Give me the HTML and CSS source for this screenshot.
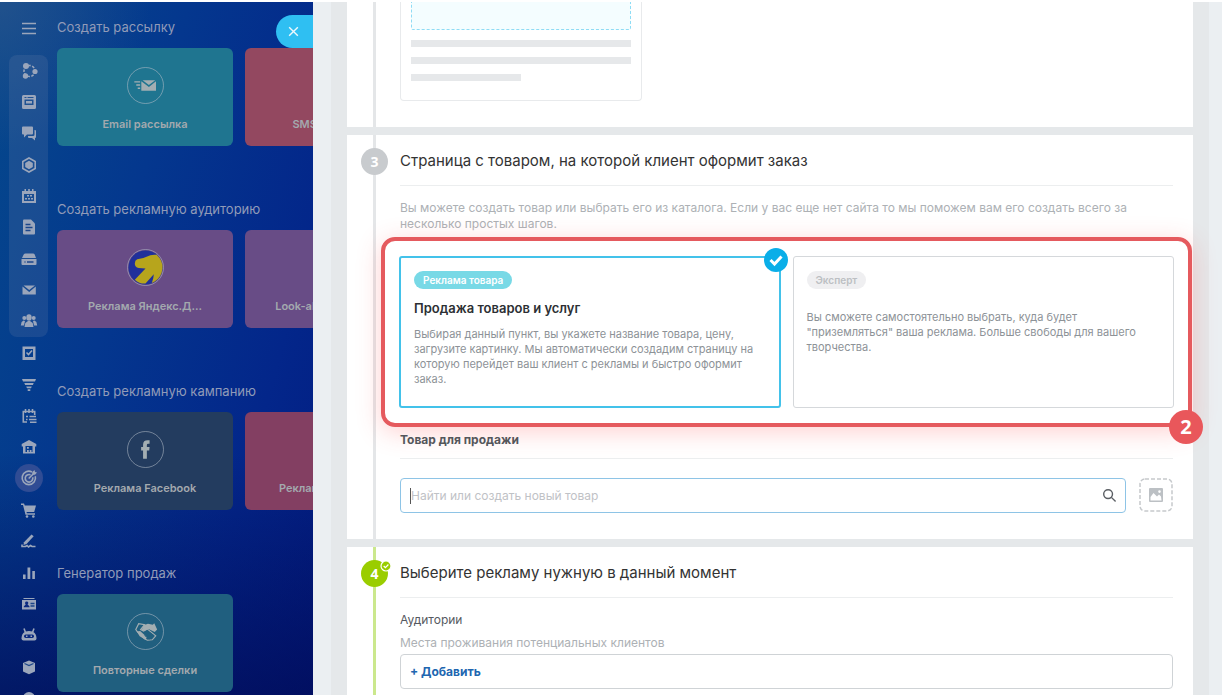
FILE: index.html
```html
<!DOCTYPE html>
<html lang="ru">
<head>
<meta charset="utf-8">
<meta name="viewport" content="width=device-width, initial-scale=1">
<title>Создать рекламу</title>
<link rel="stylesheet" href="styles.css">
</head>
<body>
<div class="app">
  <aside class="start">
    <nav class="menu" aria-label="Меню">
      <button class="menu-toggle" aria-label="Развернуть меню"><svg class="ico" viewBox="0 0 18 18"><path class="line" d="M2 3.500h14M2 8.500h14M2 13.500h14"/></svg></button>
      <div class="menu-group">
        <a href="#" aria-label="CRM"><svg class="ico" viewBox="0 0 18 18"><circle cx="9.500" cy="9" r="5.500" class="line" stroke-dasharray="2.500 1.500"/><circle cx="6" cy="4" r="3"/><circle cx="15" cy="9.500" r="2.600"/><circle cx="5.500" cy="14" r="2.700"/></svg></a>
        <a href="#" aria-label="Лента"><svg class="ico" viewBox="0 0 18 18"><path fill-rule="evenodd" d="M3.500 2h11a1.500 1.500 0 0 1 1.500 1.500v11a1.500 1.500 0 0 1-1.500 1.500h-11A1.500 1.500 0 0 1 2 14.500v-11A1.500 1.500 0 0 1 3.500 2zM4.500 4v1h2V4zm3 0v1h6V4zM4.500 6.500v5.500h9V6.500zM6 8h6v2.500H6z"/></svg></a>
        <a href="#" aria-label="Чат"><svg class="ico" viewBox="0 0 18 18"><path d="M3 2.500h9a1 1 0 0 1 1 1v6a1 1 0 0 1-1 1H7l-3 3v-3H3a1 1 0 0 1-1-1v-6a1 1 0 0 1 1-1zM14.500 6h.5a1 1 0 0 1 1 1v6a1 1 0 0 1-1 1v2.500L12 14H9a1 1 0 0 1-1-1v-1h5a1.500 1.500 0 0 0 1.500-1.500z"/></svg></a>
        <a href="#" aria-label="Сайты"><svg class="ico" viewBox="0 0 18 18"><path class="line" d="M9 2l6.200 3.500v7L9 16l-6.200-3.500v-7z"/><path d="M9 4.800l3.800 2.100v4.200L9 13.200l-3.800-2.100V6.900z"/></svg></a>
        <a href="#" aria-label="Календарь"><svg class="ico" viewBox="0 0 18 18"><path fill-rule="evenodd" d="M2 4h2.500V2H6v2h2.200V2h1.600v2H12V2h1.500v2H16v12H2zm2 3v7h10V7z"/><path d="M7 8h2v1.600H7zm3 0h2v1.600h-2zM5 11h2v1.600H5zm3 0h2v1.600H8zm3 0h2v1.600h-2z"/></svg></a>
        <a href="#" aria-label="Документы"><svg class="ico" viewBox="0 0 18 18"><path d="M4 1.500h7l4 4v10a1 1 0 0 1-1 1H4a1 1 0 0 1-1-1v-13a1 1 0 0 1 1-1z"/><path class="cut" d="M5.500 6.500h5M5.500 9.500h7M5.500 12.500h5"/></svg></a>
        <a href="#" aria-label="Диск"><svg class="ico" viewBox="0 0 18 18"><path d="M5.500 3.500h7.500q1.200 0 1.700 1L16 8H2l1.700-3.500q.5-1 1.800-1zM2 9h14.500v5a1 1 0 0 1-1 1H2.500a1 1 0 0 1-1-1V9z"/><path class="cut" d="M4.500 12h1M7 12h6.500"/></svg></a>
        <a href="#" aria-label="Почта"><svg class="ico" viewBox="0 0 18 18"><path d="M3.500 4.500h11.500L9.200 9zM2.500 5.500l6.700 5.500 6.600-5.500v8h-13.300z"/></svg></a>
        <a href="#" aria-label="Группы"><svg class="ico" viewBox="0 0 18 18"><ellipse cx="9" cy="5.500" rx="2.700" ry="3.300"/><circle cx="4.300" cy="6" r="2"/><circle cx="13.700" cy="6" r="2"/><path d="M4.500 15l.8-4L8 9h2l2.700 2 .8 4zM.8 13.500l.8-3.500 2-1.600L5 9l-1 4.500zM17.200 13.500l-.8-3.500-2-1.600L13 9l1 4.500z"/></svg></a>
      </div>
      <div class="menu-rest">
        <a href="#" aria-label="Задачи"><svg class="ico" viewBox="0 0 18 18"><path fill-rule="evenodd" d="M2.500 2.500h13v13.500h-13zm2.500 2.500v8h8V5z"/><path class="line" d="M6.500 8.500l2 2 3.500-4"/></svg></a>
        <a href="#" aria-label="Воронка"><svg class="ico" viewBox="0 0 18 18"><path d="M2 4h14l-1 2.500H3zM4.300 8h9.400l-.8 2H5.100zM6.200 11.500h5.600L11 13.200H7zM7.700 14.200h2.600v1.800H7.700z"/></svg></a>
        <a href="#" aria-label="Бронирование"><svg class="ico" viewBox="0 0 18 18"><path class="line" d="M7 15H3.300V4.500h11.400V8M5.500 2v4M9 2v4M12.500 2v4"/><path class="line" d="M6 9.500h2M9.500 9.500H16M6 12.500h1.500M9 12.500h7.500M10 15.300h6.500"/></svg></a>
        <a href="#" aria-label="Склад"><svg class="ico" viewBox="0 0 18 18"><path fill-rule="evenodd" d="M9 2l7.300 4v2.500H15V15.500H3V8.500H1.700V6zM5.500 8v6h7V8z"/><path d="M7 9h1.800v1.800H7zm0 3h1.800v2H7zm2.700 0h1.800v2H9.700z"/></svg></a>
        <a href="#" class="current" aria-label="Маркетинг"><svg class="ico" viewBox="0 0 18 18"><path class="line" d="M12 3a6.700 6.700 0 1 0 3.300 4.200M10.500 5.800a3.800 3.800 0 1 0 2.200 2.500M8.700 9.500l5-5"/><path d="M12.300 5.500V3l2.200-2 .5 2 2 .5-2 2.200z"/></svg></a>
        <a href="#" aria-label="Магазин"><svg class="ico" viewBox="0 0 18 18"><path d="M1 2.500h3l.8 2H16l-1.800 6.500H6.500l.4 1.300H15v1.400H5.500L3 4H1z"/><circle cx="7" cy="15.500" r="1.300"/><circle cx="13.300" cy="15.500" r="1.300"/></svg></a>
        <a href="#" aria-label="Подпись"><svg class="ico" viewBox="0 0 18 18"><path d="M11.500 2.500l2.200 1.700L6.500 12l-3 1 .5-2.800z"/><path class="line" d="M2 12.500v2h3.500l1.500-1 1.500 1.500 2-1.500 1.500 1h3.500"/></svg></a>
        <a href="#" aria-label="Аналитика"><svg class="ico" viewBox="0 0 18 18"><path d="M3 10.500h2.600V15H3zM7.500 3.500h2.800V15H7.500zM12.300 7h2.600v8h-2.600z"/></svg></a>
        <a href="#" aria-label="Контакты"><svg class="ico" viewBox="0 0 18 18"><path d="M3.500 3h11v1h-11zM2 5h14v9.500H2z"/><path class="cut" d="M10.500 8.500h4M10.500 11h4"/><path class="hole" d="M6.500 6.500a1.500 1.500 0 0 1 1 2.800l2 2.200v.8H3.800v-.8l2-2.200a1.500 1.500 0 0 1 .7-2.800z"/></svg></a>
        <a href="#" aria-label="Роботы"><svg class="ico" viewBox="0 0 18 18"><path class="line" d="M4 2.500l1.500 4M14 2.500l-1.500 4"/><path d="M9 5c5 0 7.500 3 7.500 7.500q0 2-2 2h-11q-2 0-2-2C1.500 8 4 5 9 5z"/><rect class="hole" x="4" y="8.500" width="10" height="3.500" rx="1.700"/><path d="M6 9.500h1.500v1.500H6zm4.500 0H12v1.500h-1.500z"/></svg></a>
        <a href="#" aria-label="Приложения"><svg class="ico" viewBox="0 0 18 18"><path d="M9 2.500l6 2.500v8.500l-6 2.800-6-2.800V5z"/><path class="cut" d="M4.500 5.500L9 7.500l4.500-2"/></svg></a>
        <a href="#" aria-label="Ещё"><svg class="ico" viewBox="0 0 18 18"><circle cx="9" cy="9" r="6"/></svg></a>
      </div>
    </nav>
    <div class="catalog">
      <section>
        <h2>Создать рассылку</h2>
        <div class="tiles">
          <button class="tile teal"><span class="ring"><svg viewBox="0 0 36 36"><path d="M6.500 13.500h6V15h-6zM8.500 16.700h4v1.500h-4zM10 20h2.500v1.500H10zM15 12.500h13l-6.500 5zM13.700 13.500l7.800 6 7.300-6v10H13.700z"/></svg></span>Email рассылка</button>
          <button class="tile rose"><span class="ring"></span>SMS рассылка</button>
        </div>
      </section>
      <section>
        <h2>Создать рекламную аудиторию</h2>
        <div class="tiles">
          <button class="tile violet"><span class="ring"><svg viewBox="0 0 36 36"><circle cx="18" cy="18" r="17.500" fill="#20309a"/><path fill="#b7a51c" d="M9.500 9.500Q17 8.500 23 5.500q3-1 6.500-.5Q36 11 35.500 19q-1 9-8 13.500l-3 1.500q2-5 2-9L18 34.500q-6 .5-11-4L18 19l-7-.5q-4-.5-4-4.500 0-3.500 2.500-4.500z"/></svg></span>Реклама Яндекс.Д...</button>
          <button class="tile violet"><span class="ring"></span>Look-alike аудитория</button>
        </div>
      </section>
      <section>
        <h2>Создать рекламную кампанию</h2>
        <div class="tiles">
          <button class="tile navy"><span class="ring"><svg viewBox="0 0 36 36"><path d="M15.500 27.500V19H13.500v-3.500h2V13q0-4.500 4.700-4.500h2V12h-1.500q-1.300 0-1.300 1.300v2.200h2.800l-.4 3.500h-2.400v8.500z"/></svg></span>Реклама Facebook</button>
          <button class="tile plum"><span class="ring"></span>Реклама ВКонтакте</button>
        </div>
      </section>
      <section>
        <h2>Генератор продаж</h2>
        <div class="tiles">
          <button class="tile sea"><span class="ring"><svg viewBox="0 0 36 36"><path d="M8 16l3-6 6 1-4 5 3 1.500 4-2 8.500 7-3.500 4-5 .5-3-1.500L9.500 18z" class="shake"/><path d="M16 11.500l4.500-1.500 5 1 1.500-1.500 3 6.500-2.500 2.500-6.500-3-4.500 2-2.500-1zM9 18l3.500-.5 7 6.500-1.500 2.500-6-3.500z"/><path class="thin" d="M18 19.500l6 4.500M20.500 18l6 4M17 22l5 4"/></svg></span>Повторные сделки</button>
        </div>
      </section>
    </div>
    <button class="close" aria-label="Закрыть"><svg viewBox="0 0 12 12"><path d="M2 2l8 8M10 2l-8 8"/></svg></button>
  </aside>

  <main class="panel">
    <div class="steps">
      <section class="step">
        <div class="rail"></div>
        <div class="body">
          <div class="preview"><div class="drop"></div><i></i><i></i><i class="short"></i></div>
        </div>
      </section>

      <section class="step">
        <div class="rail"><span class="num">3</span></div>
        <div class="body">
          <h1>Страница с товаром, на которой клиент оформит заказ</h1>
          <p class="hint">Вы можете создать товар или выбрать его из каталога. Если у вас еще нет сайта то мы поможем вам его создать всего за несколько простых шагов.</p>
          <div class="options">
            <label class="option">
              <input type="radio" name="mode" checked>
              <span class="tag">Реклама товара</span>
              <strong>Продажа товаров и услуг</strong>
              <span class="text">Выбирая данный пункт, вы укажете название товара, цену, загрузите картинку. Мы автоматически создадим страницу на которую перейдет ваш клиент с рекламы и быстро оформит заказ.</span>
              <svg class="tick" viewBox="0 0 24 24"><circle cx="12" cy="12" r="12"/><path d="M6.500 12l4 4 7-7.500"/></svg>
            </label>
            <label class="option">
              <input type="radio" name="mode">
              <span class="tag">Эксперт</span>
              <span class="text">Вы сможете самостоятельно выбрать, куда будет "приземляться" ваша реклама. Больше свободы для вашего творчества.</span>
            </label>
            <div class="callout"><span>2</span></div>
          </div>
          <h2 class="field-title"><label for="product">Товар для продажи</label></h2>
          <div class="product">
            <div class="search">
              <input id="product" type="text" placeholder="Найти или создать новый товар">
              <button aria-label="Найти"><svg viewBox="0 0 16 16"><circle cx="6.500" cy="6.500" r="4.700"/><path d="M10 10l4.500 4.500"/></svg></button>
            </div>
            <button class="image" aria-label="Добавить изображение"><svg class="frame" viewBox="0 0 34 34"><rect x="1" y="1" width="32" height="32" rx="5"/></svg><svg class="photo" viewBox="0 0 14 14"><path fill-rule="evenodd" d="M1 0h12a1 1 0 0 1 1 1v12a1 1 0 0 1-1 1H1a1 1 0 0 1-1-1V1a1 1 0 0 1 1-1zM1.500 12.500h11l-.5-4-2-2-2 2-3.500-3.500-3 4zM10.500 2.300a1.300 1.300 0 1 0 0 2.600 1.300 1.300 0 0 0 0-2.600z"/></svg></button>
          </div>
        </div>
      </section>

      <section class="step done">
        <div class="rail"><span class="num">4<svg viewBox="0 0 12 12"><circle cx="6" cy="6" r="5"/><path d="M3.700 6l1.700 1.700 3-3.200"/></svg></span></div>
        <div class="body">
          <h1>Выберите рекламу нужную в данный момент</h1>
          <h3>Аудитории</h3>
          <p class="sub">Места проживания потенциальных клиентов</p>
          <div class="box"><button class="add">+ Добавить</button></div>
        </div>
      </section>
    </div>
  </main>
</div>
</body>
</html>
```
FILE: styles.css
```css
* { box-sizing: border-box; }
body { margin: 0; background: #fff; font-family: Inter, "Liberation Sans", sans-serif; color: #333; }
h1, h2, h3, p { margin: 0; font-weight: 400; }
button { border: 0; padding: 0; background: none; font: inherit; color: inherit; cursor: pointer; }
svg { display: block; }

.app { display: flex; height: 100vh; padding: 2px 0 4px; overflow: hidden; }

/* start page */
.start {
  position: relative; flex: none; display: flex; width: 313px; overflow: hidden; color: #919bb8;
  background:
    radial-gradient(circle at 0 0, rgba(60, 90, 140, .5), transparent 150px),
    linear-gradient(180deg, transparent 65%, rgba(1, 8, 80, .65) 100%),
    linear-gradient(105deg, #05488c 0%, #04378e 38%, #03268a 75%, #021c82 100%);
}
.menu { flex: none; display: flex; flex-direction: column; width: 57px; padding: 11px 9px 0; }
.menu-toggle { flex: none; display: grid; place-items: center; height: 31px; }
.menu-toggle + * { margin-top: 11px; }
.ico { width: 18px; height: 18px; fill: #9ba6bb; }
.ico .line { fill: none; stroke: #9ba6bb; stroke-width: 1.6; }
.ico .cut { fill: none; stroke: #1c468a; stroke-width: 1.3; }
.ico .hole { fill: #0b2a80; }
.menu-group, .menu-rest { flex: none; display: grid; grid-auto-rows: 1fr; }
.menu-group { height: 282px; border-radius: 8px; background: rgba(110, 130, 170, .2); }
.menu-rest { height: 377px; }
.menu a { display: grid; place-items: center; }
.menu .current::before { content: ""; grid-area: 1 / 1; width: 28px; height: 28px; border-radius: 50%; background: #304c94; }
.menu .current .ico { grid-area: 1 / 1; }

.catalog { flex: none; display: flex; flex-direction: column; gap: 52px; padding-top: 14px; }
.catalog h2 { font-size: 13px; line-height: 22px; margin-bottom: 10px; }
.tiles { display: flex; gap: 12px; }
.tile {
  flex: none; display: flex; flex-direction: column; align-items: center; gap: 12px; width: 176px; height: 98px;
  padding-top: 19px; border-radius: 6px; color: #a3a9ae; font-size: 11px; line-height: 16px; font-weight: 600;
}
.ring { width: 37px; height: 37px; border: 1px solid rgba(180, 190, 200, .55); border-radius: 50%; }
.ring svg { fill: #a3aeb2; }
.ring .shake, .ring .thin { fill: none; stroke: #a3aeb2; stroke-width: 1.2; }
.ring .thin { stroke: #215f7e; stroke-width: 1; }
.teal { background: #1f7590; }
.rose { background: #934860; }
.violet { background: #684c86; }
.navy { background: #233c5f; }
.plum { background: #833f62; }
.sea { background: #205f7f; }
.close {
  position: absolute; top: 13px; right: 0; display: flex; align-items: center; width: 37px; height: 33px;
  padding-left: 11px; border-radius: 17px 0 0 17px; background: #2fbff2;
}
.close svg { width: 13px; height: 13px; fill: none; stroke: #eef8fd; stroke-width: 1.3; }

/* panel */
.panel { flex: 1; min-width: 0; overflow: hidden; padding: 0 13px 0 18px; background: #ebeff2; }
.steps { display: flex; flex-direction: column; gap: 8px; min-height: 100%; padding: 0 16px; background: #e5e8ea; }
.step { display: flex; padding-right: 20px; background: #fff; }
.rail {
  flex: none; display: flex; justify-content: center; align-items: flex-start; width: 53px; padding: 13px 0 0 2px;
  background: linear-gradient(#e4e6e8, #e4e6e8) 26px 0 / 3px 100% no-repeat;
}
.done .rail { background-image: linear-gradient(#cbe88d, #cbe88d); }
.num {
  position: relative; width: 27px; height: 27px; border-radius: 50%; background: #c8cbce; color: #fff;
  font: 700 14px/27px "Open Sans", sans-serif; text-align: center;
}
.done .num { background: #9acd00; }
.num svg { position: absolute; top: 0; right: -4px; width: 12px; height: 12px; fill: #9acd00; stroke: #fff; stroke-width: 1.2; }
.body { flex: 1; min-width: 0; padding-bottom: 26px; }
.body h1 { padding: 14px 0 12px; border-bottom: 1px solid #eceeef; font-size: 15px; line-height: 24px; color: #333; }

.preview { display: grid; gap: 10px; width: 242px; padding: 0 10px 19px; border: 1px solid #e8eaec; border-top: 0; border-radius: 0 0 4px 4px; }
.drop { height: 28px; border: 1px dashed #8fdcf5; border-top: 0; border-radius: 0 0 2px 2px; background: #f4fdff; }
.preview i { height: 7px; background: #e6e8ea; }
.preview .short { width: 50%; }

.hint { margin-top: 14px; font-size: 12px; line-height: 16px; color: #adb1b5; }
.options { position: relative; display: grid; grid-template-columns: 1fr 1fr; gap: 12px; margin: 24px -1px 0; }
.option {
  position: relative; display: flex; flex-direction: column; align-items: flex-start; min-height: 152px;
  padding: 14px 13px 20px; border: 1px solid #d5d8db; border-radius: 3px; cursor: pointer;
}
.option:has(:checked) { padding: 13px 13px 19px; border: 2px solid #43c2ea; }
.option input { position: absolute; opacity: 0; }
.tag { margin-bottom: 21px; padding: 0 9px; border-radius: 9px; background: #efeff1; color: #bcbfc3; font-size: 10px; line-height: 18px; font-weight: 600; }
.option:has(:checked) .tag { margin-bottom: 9px; background: #78d9e6; color: #fff; }
.option strong { margin-bottom: 9px; font-size: 13px; line-height: 20px; font-weight: 600; color: #2c2f33; }
.option .text { font-size: 11px; line-height: 15px; color: #8d9297; }
.tick { position: absolute; top: -10px; right: -9px; width: 24px; height: 24px; fill: #0aaee8; }
.tick path { fill: none; stroke: #fff; stroke-width: 3; }
.callout {
  position: absolute; inset: -19px -18px; border: 4px solid #e55a5e; border-radius: 14px;
  box-shadow: 0 5px 24px rgba(255, 70, 70, .25); pointer-events: none;
}
.callout span {
  position: absolute; right: -15px; bottom: -21px; width: 34px; height: 34px; border-radius: 50%; background: #e9575b;
  color: #fff; font: 700 20px/34px "Open Sans", sans-serif; text-align: center;
}

.field-title { margin-top: 22px; padding-bottom: 8px; border-bottom: 1px solid #eceeef; font-size: 12px; line-height: 20px; }
.field-title label { position: relative; font-weight: 700; color: #54565b; }
.product { display: flex; gap: 13px; margin-top: 19px; }
.search { flex: 1; display: flex; align-items: center; height: 35px; padding: 0 8px 0 9px; border: 1px solid #8ec4e6; border-radius: 4px; }
.search input { flex: 1; min-width: 0; border: 0; border-left: 1px solid #555; padding: 0; outline: 0; font: 12px/16px Inter, sans-serif; }
.search input::placeholder { color: #bfc2c6; opacity: 1; }
.search button svg { width: 15px; height: 15px; fill: none; stroke: #5b5f64; stroke-width: 1.5; }
.image { display: grid; place-items: center; width: 34px; height: 34px; }
.image svg { grid-area: 1 / 1; }
.frame { width: 34px; height: 34px; fill: none; stroke: #c6c9cc; stroke-width: 1.5; stroke-dasharray: 4 2; }
.photo { width: 14px; height: 14px; fill: #bcc0c4; }

.body h3 { margin-top: 12px; font-size: 12px; line-height: 20px; color: #55595f; }
.sub { margin: 4px 0 2px; font-size: 12px; line-height: 18px; color: #adb1b5; }
.box { display: flex; align-items: center; height: 35px; padding: 0 9px; border: 1px solid #cfd3d6; border-radius: 4px; }
.add { font-size: 12px; font-weight: 700; color: #2066b0; }
```
